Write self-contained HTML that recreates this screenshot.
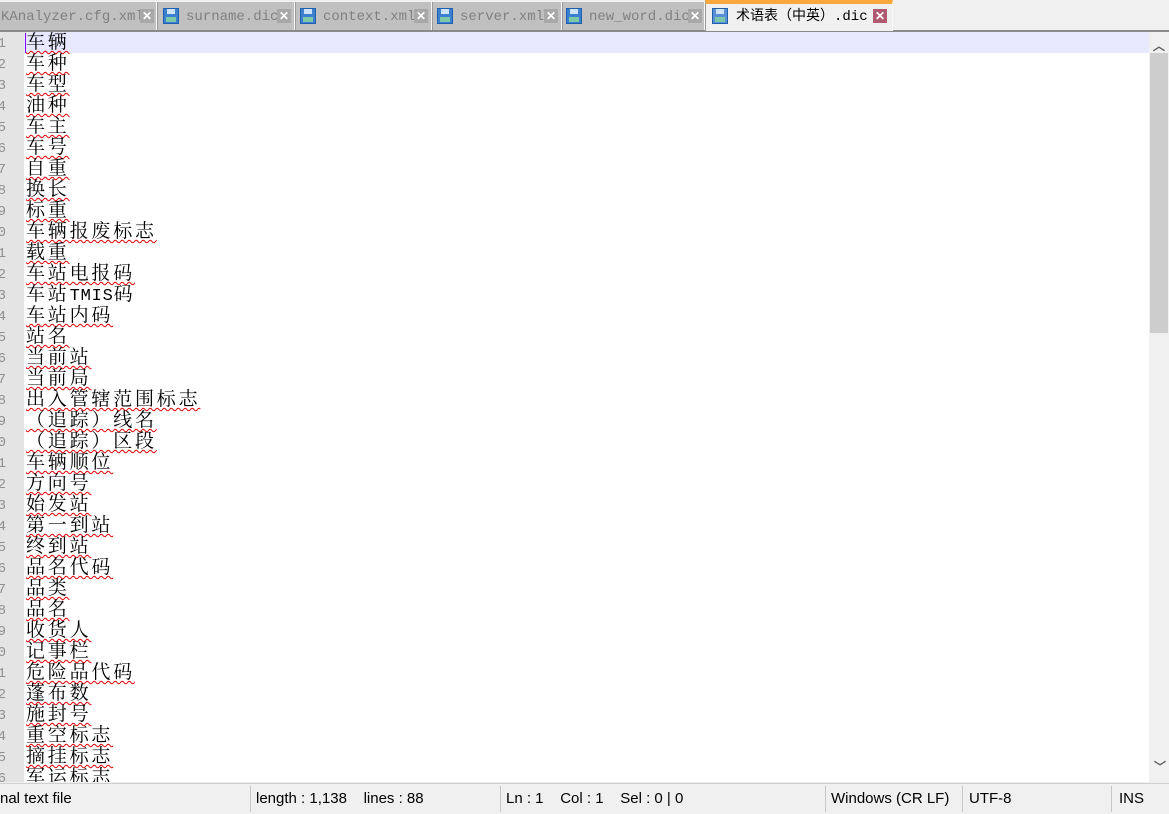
<!DOCTYPE html><html><head><meta charset="utf-8"><style>
*{margin:0;padding:0;box-sizing:border-box}
body{width:1169px;height:812px;overflow:hidden;background:#f0f0f0;position:relative;font-family:"Liberation Sans",sans-serif}
.tabbar{position:absolute;left:0;top:0;width:1169px;height:32px;background:#f0f0f0;border-bottom:2px solid #8a8a8a}
.tab{position:absolute;top:2px;height:28px;background:#c0c0c0;border-right:1px solid #f8f8f8;border-left:1px solid #9a9a9a;font-family:"Liberation Mono","Noto Sans CJK SC",monospace;font-size:14px;color:#808080;line-height:30px;white-space:nowrap;overflow:hidden}
.tab.act{top:0;height:31px;background:#f0f0f0;color:#000;border-top:4px solid #f8a83c;line-height:26px}
.flop{position:absolute;top:6px;width:16px;height:16px;background:#3a7fd0;border:1px solid #1f5fae}
.flop:before{content:"";position:absolute;left:3px;top:0;width:8px;height:5px;background:#cfe3f7}
.flop:after{content:"";position:absolute;left:2px;top:8px;width:10px;height:5px;background:#7cc8a8}
.x{position:absolute;top:7px;width:14px;height:14px;background:#a8a8a8;color:#fff;font:bold 12px/14px "Liberation Sans",sans-serif;text-align:center}
.editor{position:absolute;left:0;top:32px;width:1149px;height:750px;background:#fff;overflow:hidden}
.gut{position:absolute;left:0;top:0;width:24px;height:750px;background:#e4e4e4}
.cur{position:absolute;left:24px;top:0;width:1125px;height:21px;background:#e8e8ff}
.caret{position:absolute;left:25px;top:1px;width:1px;height:20px;background:#8000ff}
.ln{position:absolute;left:0;width:6px;overflow:hidden;direction:rtl;font-family:"Liberation Mono",monospace;font-size:14px;color:#909090;height:21px;line-height:24px}
.t{position:absolute;left:26px;height:21px;line-height:23px;font-family:"Liberation Mono","Noto Serif CJK SC",serif;font-size:19px;letter-spacing:2.8px;color:#000;white-space:nowrap;text-decoration:underline wavy #e00000;text-decoration-thickness:1px;text-underline-offset:2px}
.t b{font-weight:normal;font-size:17px;letter-spacing:0.8px}
.sb{position:absolute;left:1149px;top:32px;width:20px;height:750px;background:#f0f0f0}
.thumb{position:absolute;left:1px;top:21px;width:18px;height:280px;background:#cdcdcd}
.status{position:absolute;left:0;top:783px;width:1169px;height:29px;background:#f0f0f0;border-top:1px solid #d0d0d0;font-size:15px;color:#000;line-height:30px}
.status span{position:absolute;top:0}
.sep{position:absolute;top:2px;width:1px;height:26px;background:#c8c8c8}
</style></head><body>
<div class="tabbar">
 <div class="tab" style="left:-1px;width:158px;padding-left:1px">KAnalyzer.cfg.xml<div class="x" style="left:140px">✕</div></div>
 <div class="tab" style="left:157px;width:138px"><div class="flop" style="left:5px"></div><span style="position:absolute;left:28px">surname.dic</span><div class="x" style="left:119px">✕</div></div>
 <div class="tab" style="left:295px;width:137px"><div class="flop" style="left:4px"></div><span style="position:absolute;left:27px">context.xml</span><div class="x" style="left:118px">✕</div></div>
 <div class="tab" style="left:432px;width:130px"><div class="flop" style="left:4px"></div><span style="position:absolute;left:27px">server.xml</span><div class="x" style="left:111px">✕</div></div>
 <div class="tab" style="left:562px;width:143px"><div class="flop" style="left:3px"></div><span style="position:absolute;left:26px">new_word.dic</span><div class="x" style="left:125px">✕</div></div>
 <div class="tab act" style="left:705px;width:188px"><div class="flop" style="left:6px;top:4px;background:#5a8fd8"></div><span style="position:absolute;left:30px">术语表（中英）.dic</span><div class="x" style="left:167px;top:5px;background:#b05a70">✕</div></div>
</div>
<div class="editor">
 <div class="gut"></div><div class="cur"></div><div class="caret"></div>
 <div id="c"></div>
</div>
<div class="sb"><div style="position:absolute;left:4px;top:5px;color:#606060;font-size:12px;font-weight:bold">︿</div><div class="thumb"></div><div style="position:absolute;left:5px;top:726px;color:#606060;font-size:12px;font-weight:bold">﹀</div></div>
<div class="status">
 <span style="left:0">nal text file</span><div class="sep" style="left:250px"></div>
 <span style="left:256px">length : 1,138&nbsp;&nbsp;&nbsp; lines : 88</span><div class="sep" style="left:500px"></div>
 <span style="left:506px">Ln : 1&nbsp;&nbsp;&nbsp; Col : 1&nbsp;&nbsp;&nbsp; Sel : 0 | 0</span><div class="sep" style="left:825px"></div>
 <span style="left:831px">Windows (CR LF)</span><div class="sep" style="left:962px"></div>
 <span style="left:969px">UTF-8</span><div class="sep" style="left:1111px"></div>
 <span style="left:1119px">INS</span>
</div>
<script>
var w="车辆,车种,车型,油种,车主,车号,自重,换长,标重,车辆报废标志,载重,车站电报码,车站<b>TMIS</b>码,车站内码,站名,当前站,当前局,出入管辖范围标志,（追踪）线名,（追踪）区段,车辆顺位,方向号,始发站,第一到站,终到站,品名代码,品类,品名,收货人,记事栏,危险品代码,蓬布数,施封号,重空标志,摘挂标志,军运标志".split(",");
var h="";for(var i=0;i<w.length;i++){var y=i*21;h+='<div class="ln" style="top:'+y+'px">'+((i+1)%10)+'</div><div class="t" style="top:'+y+'px'+(i==12?';text-decoration:none':'')+'">'+w[i]+'</div>';}
document.getElementById("c").innerHTML=h;
</script>
</body></html>
